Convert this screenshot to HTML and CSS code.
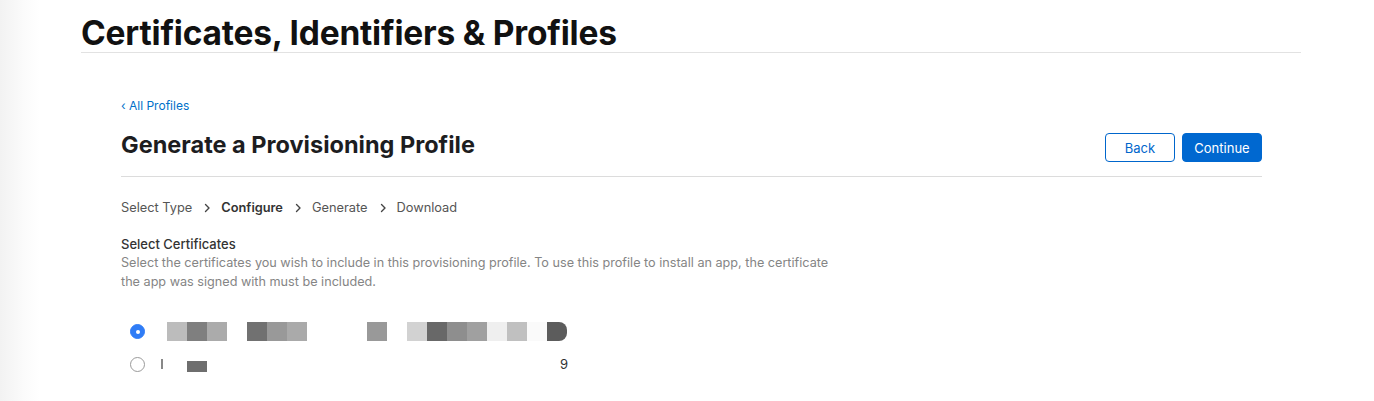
FILE: index.html
```html
<!DOCTYPE html>
<html>
<head>
<meta charset="utf-8">
<link rel="stylesheet" href="styles.css">
</head>
<body>
<div class="page">
  <header class="top">
    <h1 class="site-title">Certificates, Identifiers &amp; Profiles</h1>
  </header>
  <main class="content">
    <a class="back-link" href="#">&#8249; All Profiles</a>
    <div class="title-row">
      <h2 class="page-title">Generate a Provisioning Profile</h2>
      <div class="actions">
        <button class="btn btn-outline">Back</button>
        <button class="btn btn-primary">Continue</button>
      </div>
    </div>
    <nav class="steps">
      <span class="step">Select Type</span>
      <span class="chev"><svg width="7" height="10" viewBox="0 0 7 10"><path d="M1.5 1.5 L5 5 L1.5 8.5" fill="none" stroke="#444" stroke-width="1.4" stroke-linecap="round" stroke-linejoin="round"/></svg></span>
      <span class="step current">Configure</span>
      <span class="chev"><svg width="7" height="10" viewBox="0 0 7 10"><path d="M1.5 1.5 L5 5 L1.5 8.5" fill="none" stroke="#444" stroke-width="1.4" stroke-linecap="round" stroke-linejoin="round"/></svg></span>
      <span class="step">Generate</span>
      <span class="chev"><svg width="7" height="10" viewBox="0 0 7 10"><path d="M1.5 1.5 L5 5 L1.5 8.5" fill="none" stroke="#444" stroke-width="1.4" stroke-linecap="round" stroke-linejoin="round"/></svg></span>
      <span class="step">Download</span>
    </nav>
    <section class="section">
      <h3 class="section-title">Select Certificates</h3>
      <p class="section-desc">Select the certificates you wish to include in this provisioning profile. To use this profile to install an app, the certificate the app was signed with must be included.</p>
    </section>
    <div class="cert-list">
      <label class="cert-row">
        <span class="radio checked"></span>
        <span class="redacted r1">
          <i class="px g1"></i><i class="px g2"></i><i class="px g3"></i><i class="gap w20"></i>
          <i class="px g4"></i><i class="px g5"></i><i class="px g6"></i><i class="gap w60"></i>
          <i class="px g5"></i><i class="gap w20"></i>
          <i class="px g7"></i><i class="px g8"></i><i class="px g9"></i><i class="px g10"></i><i class="px g11"></i><i class="px g12"></i><i class="px g13"></i><i class="px g14 end"></i>
        </span>
      </label>
      <label class="cert-row">
        <span class="radio"></span>
        <span class="redacted r2">
          <i class="tick"></i><i class="gap w24"></i><i class="px g15 short"></i><i class="gap w353"></i><span class="digit">9</span>
        </span>
      </label>
    </div>
  </main>
</div>
</body>
</html>
```
FILE: styles.css
```css
* { box-sizing: border-box; }
html, body { margin: 0; padding: 0; background: #fff; }
body {
  font-family: Inter, "Liberation Sans", Arial, sans-serif;
  color: #1d1d1f;
  background: linear-gradient(to right, #f2f2f2 0, #fbfbfb 24px, #fff 40px);
  min-height: 401px;
}
.page { padding: 0 73px 0 81px; }
.top {
  border-bottom: 1px solid #e2e2e2;
  height: 53px;
  padding-top: 14px;
}
.site-title {
  margin: 0;
  font-size: 33.5px;
  line-height: 38px;
  font-weight: 700;
  letter-spacing: -0.2px;
  color: #111;
}
.content { padding: 45px 39px 0 40px; }
.back-link {
  display: block;
  font-size: 12px;
  line-height: 16px;
  color: #0070c9;
  text-decoration: none;
}
.title-row {
  display: flex;
  align-items: flex-start;
  justify-content: space-between;
  margin-top: 16px;
  padding-bottom: 14px;
  border-bottom: 1px solid #dcdcdc;
}
.page-title {
  margin: 0;
  font-size: 23.5px;
  line-height: 30px;
  font-weight: 700;
  color: #1d1d1f;
}
.actions { display: flex; gap: 7px; margin-top: 3px; }
.btn {
  font-family: inherit;
  font-size: 13px;
  height: 29px;
  border-radius: 4px;
  padding: 0;
  cursor: pointer;
}
.btn-outline {
  width: 70px;
  background: #fff;
  border: 1px solid #0066cc;
  color: #0066cc;
}
.btn-primary {
  width: 80px;
  background: #0068d0;
  border: 1px solid #0068d0;
  color: #fff;
}
.steps {
  display: flex;
  align-items: center;
  margin-top: 22px;
  font-size: 12.8px;
  line-height: 18px;
  color: #555;
}
.chev { display: inline-flex; margin: 0 10px 0 12px; }
.step.current { font-weight: 600; color: #333; }
.section { margin-top: 18px; }
.section-title {
  margin: 0;
  font-size: 13px;
  line-height: 18px;
  font-weight: 500;
  color: #333;
}
.section-desc {
  margin: 0;
  max-width: 714px;
  font-size: 12.65px;
  line-height: 19px;
  color: #858585;
}
.cert-list { margin-top: 30px; display: flex; flex-direction: column; gap: 13px; }
.cert-row { display: flex; align-items: center; height: 20px; }
.radio {
  width: 15px; height: 15px;
  margin-left: 9px;
  border-radius: 50%;
  border: 1px solid #9a9a9a;
  background: #fff;
  flex: none;
  position: relative;
}
.radio.checked { background: #2f7cf6; border-color: #2f7cf6; }
.radio.checked::after {
  content: "";
  position: absolute;
  left: 5px; top: 5px;
  width: 4px; height: 4px;
  border-radius: 50%;
  background: #fff;
}
.redacted { display: flex; align-items: center; margin-left: 22px; }
.redacted.r2 { margin-left: 16px; }
.px { display: block; width: 20px; height: 19px; }
.px.short { height: 11px; margin-top: 4px; }
.gap { display: block; height: 1px; }
.w20 { width: 20px; }
.w24 { width: 24px; }
.w60 { width: 60px; }
.w353 { width: 353px; }
.end { border-radius: 0 8px 8px 0; }
.tick { display: block; width: 2px; height: 10px; background: #888; }
.g1 { background: #bcbcbc; }
.g2 { background: #7f7f7f; }
.g3 { background: #ababab; }
.g4 { background: #717171; }
.g5 { background: #999; }
.g6 { background: #aaa; }
.g7 { background: #d2d2d2; }
.g8 { background: #686868; }
.g9 { background: #8e8e8e; }
.g10 { background: #a0a0a0; }
.g11 { background: #efefef; }
.g12 { background: #c0c0c0; }
.g13 { background: #fafafa; }
.g14 { background: #5c5c5c; }
.g15 { background: #6e6e6e; }
.digit { font-size: 13px; color: #333; }
```
